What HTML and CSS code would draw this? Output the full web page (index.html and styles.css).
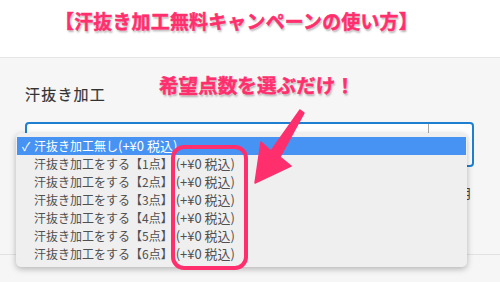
FILE: index.html
```html
<!DOCTYPE html>
<html lang="ja">
<head>
    <meta charset="UTF-8">
    <meta name="viewport" content="width=device-width, initial-scale=1.0">
    <title>汗抜き加工無料キャンペーンの使い方</title>
    <link rel="stylesheet" href="styles.css">
</head>
<body>
    <div class="page">
        <div class="header">
            <h1 class="title">【汗抜き加工無料キャンペーンの使い方】</h1>
        </div>
        <div class="main">
            <div class="label">汗抜き加工</div>
            <div class="select-box">
                <div class="select-value"></div>
                <div class="select-side"></div>
            </div>
            <div class="note-row"><span class="note">月</span></div>
            <div class="divider"></div>

            <!-- 開いたプルダウン -->
            <ul class="menu">
                <li class="menu-item selected"><span class="check">✓</span>汗抜き加工無し<span class="price first">(+¥0 税込)</span></li>
                <li class="menu-item">汗抜き加工をする【1点】<span class="price">(+¥0 税込)</span></li>
                <li class="menu-item">汗抜き加工をする【2点】<span class="price">(+¥0 税込)</span></li>
                <li class="menu-item">汗抜き加工をする【3点】<span class="price">(+¥0 税込)</span></li>
                <li class="menu-item">汗抜き加工をする【4点】<span class="price">(+¥0 税込)</span></li>
                <li class="menu-item">汗抜き加工をする【5点】<span class="price">(+¥0 税込)</span></li>
                <li class="menu-item">汗抜き加工をする【6点】<span class="price">(+¥0 税込)</span></li>
            </ul>
        </div>

        <!-- 注釈 -->
        <div class="callout">希望点数を選ぶだけ！</div>
        <svg class="marks" width="500" height="282" viewBox="0 0 500 282">
            <rect x="173" y="147" width="73" height="121" rx="11" fill="none" stroke="#ff2f6e" stroke-width="4"/>
            <polygon points="300,110 304,113 280,157 291,166 255,183 261,142 271,151" fill="#ff2f6e" stroke="#ff2f6e" stroke-width="1.5" stroke-linejoin="round"/>
        </svg>
    </div>
</body>
</html>
```

FILE: styles.css
```css
body {
    margin: 0;
    font-family: 'Noto Sans CJK JP', 'Noto Sans', sans-serif;
    background-color: #fff;
}
.page {
    position: relative;
    width: 500px;
    height: 282px;
    overflow: hidden;
}
.header {
    height: 57px;
    background-color: #fff;
    border-bottom: 1px solid #e6e6e6;
}
.title {
    margin: 0;
    padding: 7px 0 0 55px;
    font-size: 19px;
    line-height: 28px;
    letter-spacing: 0.15px;
    font-weight: bold;
    color: #ff2f6e;
    white-space: nowrap;
    -webkit-text-stroke: 0.5px #ff2f6e;
    text-shadow: 0 0 2px #fff, 1px 2px 2px rgba(0, 0, 0, 0.3);
}
.main {
    position: relative;
    height: 224px;
    background-color: #f6f6f6;
    padding-top: 24px;
    box-sizing: border-box;
}
.label {
    margin-left: 25px;
    font-size: 15px;
    line-height: 24px;
    letter-spacing: 1.2px;
    color: #333;
    -webkit-text-stroke: 0.2px #333;
}
.select-box {
    display: flex;
    margin: 16px 26px 0 25px;
    height: 45px;
    border: 2px solid #1f7fd1;
    border-radius: 4px;
    background-color: #fff;
    box-sizing: border-box;
}
.select-value {
    flex: 1;
    border-right: 1px solid #a8a8a8;
}
.select-side {
    width: 43px;
}
.note-row {
    display: flex;
    justify-content: flex-end;
    padding-right: 28px;
    margin-top: 17px;
}
.note {
    font-size: 13px;
    line-height: 18px;
    color: #444;
}
.divider {
    margin-top: 52px;
    border-top: 1px solid #e2e2e2;
}
.menu {
    position: absolute;
    left: 16px;
    top: 75px;
    width: 451px;
    margin: 0;
    padding: 4px 1px;
    list-style: none;
    background-color: #efefef;
    border-radius: 5px;
    box-shadow: 0 2px 6px rgba(0, 0, 0, 0.28);
    box-sizing: border-box;
}
.menu-item {
    height: 18px;
    line-height: 18px;
    padding-left: 17px;
    font-size: 12px;
    color: #505050;
    white-space: nowrap;
}
.menu-item.selected {
    background-color: #4793f3;
    color: #fff;
    padding-left: 5px;
}
.check {
    display: inline-block;
    width: 12px;
}
.price {
    margin-left: 3px;
    font-size: 13px;
}
.price.first {
    margin-left: 0;
}
.callout {
    position: absolute;
    left: 159px;
    top: 71px;
    font-size: 19.6px;
    line-height: 28px;
    font-weight: bold;
    color: #ff2f6e;
    white-space: nowrap;
    -webkit-text-stroke: 0.5px #ff2f6e;
    text-shadow: 0 0 2px #fff, 1px 2px 2px rgba(0, 0, 0, 0.3);
}
.marks {
    position: absolute;
    left: 0;
    top: 0;
    pointer-events: none;
}
```
